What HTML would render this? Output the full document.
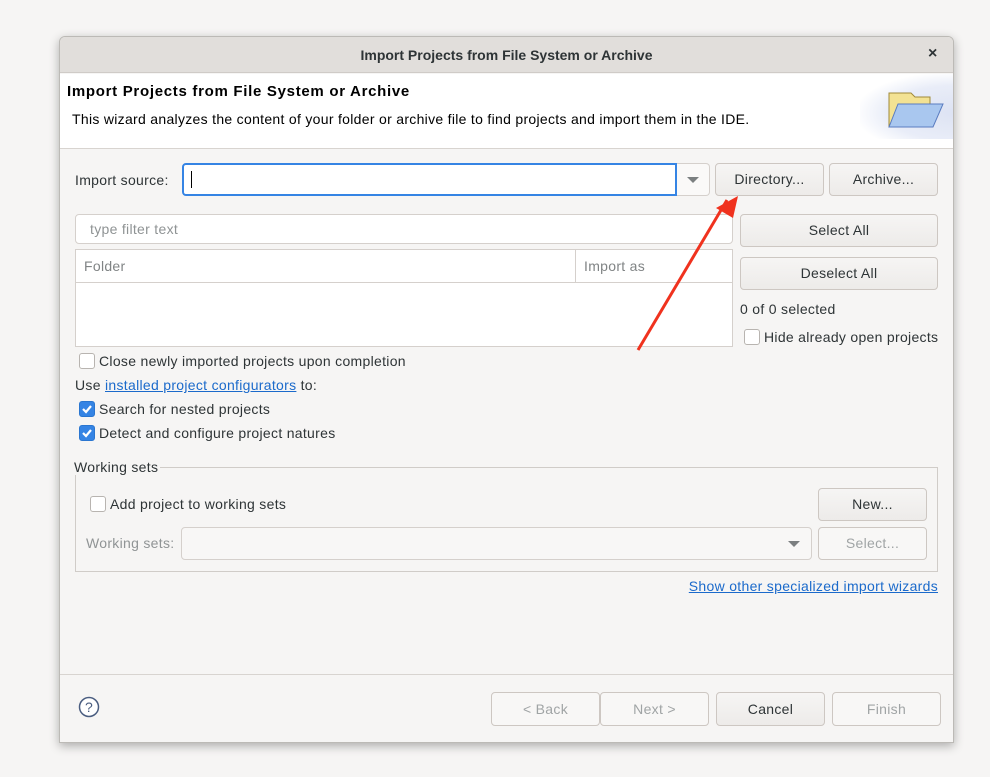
<!DOCTYPE html>
<html><head><style>
*{box-sizing:border-box;margin:0;padding:0}
body{width:990px;height:777px;background:#f6f5f4;font-family:"Liberation Sans",sans-serif;font-size:14px;color:#2e3436;position:relative;overflow:hidden;letter-spacing:0.3px}
.a{position:absolute}
#dlg{left:59px;top:36px;width:895px;height:707px;background:#f6f5f4;border:1px solid #bcbab6;box-shadow:0 3px 10px rgba(0,0,0,.3);border-radius:6px 6px 0 0;overflow:hidden}
.btn{position:absolute;border:1px solid #cdc7c2;border-radius:4px;background:linear-gradient(#f6f5f4,#edebe9);text-align:center;color:#2e3436;font-size:14px}
.dis{color:#a0a4a5;background:#f8f7f6}
.cb{position:absolute;width:16px;height:16px;border:1px solid #b8b4b0;border-radius:3px;background:#fff}
.cbc{background:#3584e4;border-color:#2a76d0}
.t{position:absolute;white-space:nowrap}
</style></head><body>
<div id="dlg" class="a">
 <div class="a" style="left:0;top:0;width:895px;height:36px;background:#e1dedb;border-bottom:1px solid #cfcbc7"></div>
 <div class="t" style="left:0;width:893px;top:10px;text-align:center;font-weight:bold;font-size:14px;color:#2e3436;letter-spacing:0">Import Projects from File System or Archive</div>
 <div class="t" style="left:868px;top:8px;font-size:16px;font-weight:bold">×</div>
 <div class="a" style="left:0;top:37px;width:895px;height:75px;background:#fff;border-bottom:1px solid #d8d4d0"></div>
 <div class="a" style="left:800px;top:37px;width:95px;height:65px;background:radial-gradient(ellipse at 100% 60%,#dde3f3 0%,#e9edf8 50%,#fff 75%)"></div>
 <div class="t" style="left:7px;top:46px;font-weight:bold;font-size:15px;letter-spacing:0.7px;color:#000">Import Projects from File System or Archive</div>
 <div class="t" style="left:12px;top:74px;font-size:14px;color:#000">This wizard analyzes the content of your folder or archive file to find projects and import them in the IDE.</div>
 <svg class="a" style="left:826px;top:50px" width="60" height="45"><path d="M3 6h22l4 4h15v30H3z" fill="#f3e293" stroke="#a08a3a"/><path d="M12 17h45L47 40H3z" fill="#a9c7ef" stroke="#5a7cc0"/></svg>
 <div class="t" style="left:15px;top:135px">Import source:</div>
 <div class="a" style="left:122px;top:126px;width:495px;height:33px;background:#fff;border:2px solid #3584e4;border-radius:4px 0 0 4px"></div>
 <div class="a" style="left:131px;top:134px;width:1px;height:17px;background:#000"></div>
 <div class="a" style="left:617px;top:126px;width:33px;height:33px;background:#faf9f8;border:1px solid #d5d0cc;border-left:none;border-radius:0 4px 4px 0"></div>
 <div class="a" style="left:627px;top:140px;border:6px solid transparent;border-top:6px solid #7b7f80;border-bottom:none"></div>
 <div class="btn" style="left:655px;top:126px;width:109px;height:33px;line-height:31px">Directory...</div>
 <div class="btn" style="left:769px;top:126px;width:109px;height:33px;line-height:31px">Archive...</div>
 <div class="a" style="left:15px;top:177px;width:658px;height:30px;background:#fff;border:1px solid #d5d0cc;border-radius:4px"></div>
 <div class="t" style="left:30px;top:184px;color:#8f9394">type filter text</div>
 <div class="a" style="left:15px;top:212px;width:658px;height:98px;background:#fff;border:1px solid #d5d0cc"></div>
 <div class="a" style="left:15px;top:245px;width:658px;height:1px;background:#d5d0cc"></div>
 <div class="a" style="left:515px;top:212px;width:1px;height:33px;background:#d5d0cc"></div>
 <div class="t" style="left:24px;top:221px;color:#808485">Folder</div>
 <div class="t" style="left:524px;top:221px;color:#808485">Import as</div>
 <div class="btn" style="left:680px;top:177px;width:198px;height:33px;line-height:31px">Select All</div>
 <div class="btn" style="left:680px;top:220px;width:198px;height:33px;line-height:31px">Deselect All</div>
 <div class="t" style="left:680px;top:264px">0 of 0 selected</div>
 <div class="cb" style="left:684px;top:292px"></div>
 <div class="t" style="left:704px;top:292px">Hide already open projects</div>
 <div class="cb" style="left:19px;top:316px"></div>
 <div class="t" style="left:39px;top:316px">Close newly imported projects upon completion</div>
 <div class="t" style="left:15px;top:340px">Use <span style="color:#1b6acb;text-decoration:underline">installed project configurators</span> to:</div>
 <div class="cb cbc" style="left:19px;top:364px"><svg width="14" height="14" style="position:absolute;left:0;top:0"><path d="M3 7l3 3 5-6" stroke="#fff" stroke-width="2.2" fill="none"/></svg></div>
 <div class="t" style="left:39px;top:364px">Search for nested projects</div>
 <div class="cb cbc" style="left:19px;top:388px"><svg width="14" height="14" style="position:absolute;left:0;top:0"><path d="M3 7l3 3 5-6" stroke="#fff" stroke-width="2.2" fill="none"/></svg></div>
 <div class="t" style="left:39px;top:388px">Detect and configure project natures</div>
 <div class="a" style="left:15px;top:430px;width:863px;height:105px;border:1px solid #d0ccc8"></div>
 <div class="t" style="left:14px;top:422px;background:#f6f5f4;padding-right:2px">Working sets</div>
 <div class="cb" style="left:30px;top:459px"></div>
 <div class="t" style="left:50px;top:459px">Add project to working sets</div>
 <div class="btn" style="left:758px;top:451px;width:109px;height:33px;line-height:31px">New...</div>
 <div class="t" style="left:26px;top:498px;color:#909495">Working sets:</div>
 <div class="a" style="left:121px;top:490px;width:631px;height:33px;background:#f8f7f6;border:1px solid #d5d0cc;border-radius:4px"></div>
 <div class="a" style="left:728px;top:504px;border:6px solid transparent;border-top:6px solid #7b7f80;border-bottom:none"></div>
 <div class="btn dis" style="left:758px;top:490px;width:109px;height:33px;line-height:31px">Select...</div>
 <div class="t" style="right:15px;top:541px;color:#1b6acb;text-decoration:underline">Show other specialized import wizards</div>
 <div class="a" style="left:0;top:637px;width:895px;height:1px;background:#d8d4d0"></div>
 <svg class="a" style="left:18px;top:659px" width="22" height="22"><circle cx="11" cy="11" r="9.5" fill="#fff" stroke="#4a5d80" stroke-width="1.5"/><text x="11" y="16" text-anchor="middle" font-size="14" font-family="Liberation Sans" fill="#4a5d80">?</text></svg>
 <div class="btn dis" style="left:431px;top:655px;width:109px;height:34px;line-height:32px">&lt; Back</div>
 <div class="btn dis" style="left:540px;top:655px;width:109px;height:34px;line-height:32px">Next &gt;</div>
 <div class="btn" style="left:656px;top:655px;width:109px;height:34px;line-height:32px">Cancel</div>
 <div class="btn dis" style="left:772px;top:655px;width:109px;height:34px;line-height:32px">Finish</div>
</div>
<svg class="a" style="left:0;top:0" width="990" height="777"><path d="M638 350L727 200" stroke="#f0321e" stroke-width="3"/><path d="M738 196L716 208L733 218Z" fill="#f0321e"/></svg>
</body></html>
